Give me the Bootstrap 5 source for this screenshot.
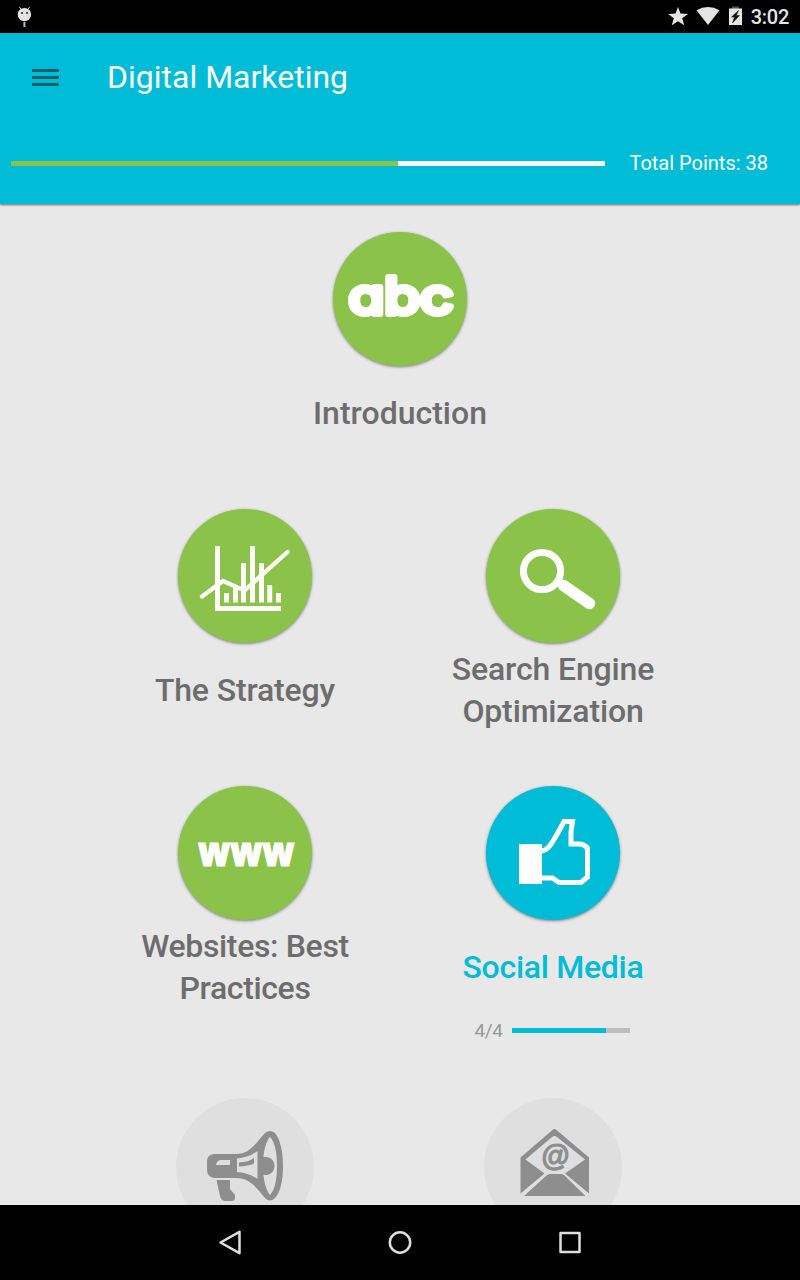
<!DOCTYPE html>
<html lang="en">
<head>
<meta charset="utf-8">
<meta name="viewport" content="width=device-width, initial-scale=1">
<title>Digital Marketing</title>
<link href="https://cdn.jsdelivr.net/npm/bootstrap@5.3.0/dist/css/bootstrap.min.css" rel="stylesheet">
<style>
  body { font-family: Roboto, sans-serif; background: #e8e8e8; height: 1280px; overflow: hidden; }
  .status-bar { height: 33px; background: #000; padding-right: 11px; }
  .clock { font-size: 20px; font-weight: 500; line-height: 33px; color: #e5e5e5; margin-left: 8px; padding-top: 1px; letter-spacing: -.25px; }
  .app-header { height: 171px; background: #00bcd7; box-shadow: 0 1px 2px rgba(0,0,0,.55); z-index: 1; }
  .toolbar { height: 88px; padding-left: 32px; }
  .app-title { font-size: 32px; font-weight: 400; line-height: 42px; margin-left: 47px; }
  .points-row { height: 84px; padding: 0 32px 0 11px; }
  .points-bar { width: 594px; height: 5px; background: #fff; border-radius: 0; }
  .points-bar .progress-bar { background: #8bc34a; }
  .points-text { font-size: 20px; line-height: 24px; }
  .lessons { padding-top: 28px; }
  .lesson-row { height: 277px; }
  .lesson-row.tall { height: 312px; }
  .lesson { width: 308px; }
  .lesson-pair { padding-left: 91px; }
  .disc { width: 134px; height: 134px; background: #8bc34a; box-shadow: 0 1px 3px rgba(0,0,0,.45); }
  .disc.active { background: #00bcd7; }
  .disc.locked { width: 138px; height: 138px; background: #dfdfdf; box-shadow: none; }
  .disc svg { display: block; width: 100%; height: 100%; overflow: visible; }
  .lesson-name { height: 84px; margin-top: 5px; width: 240px; font-size: 32px; font-weight: 500; line-height: 42px; color: #6d6d6d; }
  .lesson-name.snug { letter-spacing: -.15px; }
  .lesson-name.tight { letter-spacing: -.35px; }
  .lesson-name.current { color: #00bcd7; letter-spacing: -.28px; }
  .step-row { height: 42px; gap: 9px; padding-right: 2px; }
  .step-count { font-size: 19px; line-height: 24px; color: #999; padding-top: 2px; letter-spacing: -.4px; }
  .step-bar { width: 118px; height: 5px; background: #bdbdbd; border-radius: 0; }
  .step-bar .progress-bar { background: #00bcd7; }
  .nav-keys { height: 75px; background: #000; z-index: 2; }
</style>
</head>
<body class="d-flex flex-column">

<div class="status-bar d-flex align-items-center flex-shrink-0">
  <svg width="50" height="33" viewBox="0 0 50 33" fill="#e3e3e3">
    <circle cx="24.4" cy="14.6" r="6.7"/>
    <path d="M19.3 7l2.5 3M29.7 7l-2.5 3" stroke="#e3e3e3" stroke-width="1"/>
    <path d="M21 12.2h2v1.5h-2zM26 12.2h2v1.5h-2z" fill="#222"/>
    <path d="M23.4 22h2v5h-2z" fill="#bbb"/>
  </svg>
  <svg class="ms-auto" width="76" height="33" viewBox="667 0 76 33" fill="#e5e5e5">
    <path d="M678 7l2.500 6.600 7.500.3-5.800 4.300 2 7-6.200-4-6.200 4 2-7-5.800-4.300 7.500-.3z"/>
    <path d="M696.500 10.300Q708 3.500 719.500 10.300L708 25z"/>
    <path d="M732 6.500h7v3h-7z" fill="#555"/>
    <path d="M729 8.500h13v16.500h-13z"/>
    <path d="M738.500 10.500l-7 6.500h3l-2 6 7-7.500h-3.200l2.200-5z" fill="#111" stroke="#111" stroke-width=".5"/>
  </svg>
  <span class="clock">3:02</span>
</div>

<header class="app-header flex-shrink-0 position-relative text-white">
  <div class="toolbar d-flex align-items-center">
    <svg width="28" height="18" viewBox="0 0 28 18"><path d="M0 2.500h27M0 9.500h27M0 16.500h27" stroke="#00606d" stroke-width="3"/></svg>
    <h1 class="app-title mb-0">Digital Marketing</h1>
  </div>
  <div class="points-row d-flex align-items-center justify-content-between">
    <div class="progress points-bar"><div class="progress-bar" style="width:65.15%"></div></div>
    <span class="points-text">Total Points: 38</span>
  </div>
</header>

<main class="lessons flex-grow-1 overflow-hidden">
  <section class="lesson-row d-flex justify-content-center">
    <div class="lesson d-flex flex-column align-items-center">
      <div class="disc rounded-circle">
        <svg viewBox="0 0 134 134"><text x="15.500" y="82" textLength="105" lengthAdjust="spacingAndGlyphs" font-family="Inter, sans-serif" font-weight="400" font-size="50" fill="#fff" stroke="#fff" stroke-width="6" stroke-linejoin="round" style="font-feature-settings:'cv11'">abc</text></svg>
      </div>
      <div class="lesson-name d-flex align-items-center justify-content-center text-center">Introduction</div>
    </div>
  </section>

  <section class="lesson-row lesson-pair d-flex">
    <div class="lesson d-flex flex-column align-items-center">
      <div class="disc rounded-circle">
        <svg viewBox="178 509 134 134" fill="none" stroke="#fffdfa" stroke-width="5">
          <path d="M217.500 546v62.500H281"/>
          <path d="M226.500 593v9.500M235.500 586v16.500M243.500 563v39.500M252.500 546v56.500M261.500 563v39.500M269.700 585v17.500M278.500 593v9.500"/>
          <path d="M202 596.500L223 581l21.500 9.500L287.500 552" stroke-width="4.300" stroke-linecap="round"/>
        </svg>
      </div>
      <div class="lesson-name snug d-flex align-items-center justify-content-center text-center">The Strategy</div>
    </div>
    <div class="lesson d-flex flex-column align-items-center">
      <div class="disc rounded-circle">
        <svg viewBox="486 509 134 134" fill="none" stroke="#fff">
          <circle cx="542" cy="571" r="18.600" stroke-width="7"/>
          <path d="M563.500 585.500L589.500 603.500" stroke-width="11.500" stroke-linecap="round"/>
        </svg>
      </div>
      <div class="lesson-name snug d-flex align-items-center justify-content-center text-center">Search Engine Optimization</div>
    </div>
  </section>

  <section class="lesson-row tall lesson-pair d-flex">
    <div class="lesson d-flex flex-column align-items-center">
      <div class="disc rounded-circle">
        <svg viewBox="178 786 134 134"><text x="198" y="865.800" textLength="96.500" lengthAdjust="spacingAndGlyphs" font-family="'Open Sans', sans-serif" font-weight="800" font-size="41" fill="#fff" stroke="#fff" stroke-width="1.200">www</text></svg>
      </div>
      <div class="lesson-name tight d-flex align-items-center justify-content-center text-center">Websites: Best Practices</div>
    </div>
    <div class="lesson d-flex flex-column align-items-center">
      <div class="disc active rounded-circle">
        <svg viewBox="486 786 134 134">
          <path d="M519 844h23v40h-23z" fill="#fff"/>
          <path d="M542 851Q548 850 553 841Q558 833 564 821.500H572.500L571 831.500V844H579Q584 844 587.500 848V877L581 882.500H559L552.500 878H542" fill="none" stroke="#fff" stroke-width="5"/>
        </svg>
      </div>
      <div class="lesson-name current d-flex align-items-center justify-content-center text-center">Social Media</div>
      <div class="step-row d-flex align-items-center">
        <span class="step-count">4/4</span>
        <div class="progress step-bar"><div class="progress-bar" style="width:80.5%"></div></div>
      </div>
    </div>
  </section>

  <section class="lesson-row lesson-pair d-flex">
    <div class="lesson d-flex flex-column align-items-center">
      <div class="disc locked rounded-circle">
        <svg viewBox="176 1098 138 138" fill="#8e8e8e">
          <path fill-rule="evenodd" d="M214 1154H236C251 1154 257 1141 265 1133Q270 1129 275 1133C280 1139 283 1151 283 1166S280 1193 275 1198Q270 1203 265 1198C257 1189 251 1178 236 1178H214Q207 1177 207 1169V1161Q207 1155 214 1154zM270 1137C266 1141 263 1152 263 1166S266 1190 270 1195C275 1190 277 1179 277 1166S275 1142 270 1137zM216 1165Q217 1160 221 1160H230V1165zM237 1158.500V1172Q248 1172.500 257.500 1179V1151Q248 1158 237 1158.500z"/>
          <path d="M263 1157H267Q274.500 1159 274.500 1166T267 1175H263z"/>
          <path d="M239 1162.500Q249 1162 254 1158V1163.500Q248 1166 239 1166.500z"/>
          <path d="M216.500 1180H230V1189L235 1195V1198Q235 1201 232 1201H224Q221 1200 220 1196z"/>
        </svg>
      </div>
      <div class="lesson-name"></div>
    </div>
    <div class="lesson d-flex flex-column align-items-center">
      <div class="disc locked rounded-circle">
        <svg viewBox="484 1098 138 138" fill="#8e8e8e">
          <path fill-rule="evenodd" d="M520.500 1157.500L552.500 1130Q554.500 1128 556.500 1130L589 1157.500V1193.500L565 1173.500L585 1159.500L557 1137Q554.500 1135 552 1137L525.500 1159.500L544.500 1173.500L520.500 1193.500z"/>
          <path d="M524 1196L546.500 1175.500Q548 1174 550 1174H561Q563 1174 564.500 1175.500L585.500 1196z"/>
          <text x="541" y="1165.500" textLength="28" lengthAdjust="spacingAndGlyphs" font-family="'Liberation Sans', sans-serif" font-weight="700" font-style="italic" font-size="29" stroke="#8e8e8e" stroke-width="1.100">@</text>
        </svg>
      </div>
      <div class="lesson-name"></div>
    </div>
  </section>
</main>

<footer class="nav-keys flex-shrink-0">
  <svg class="d-block" width="800" height="75" viewBox="0 1205 800 75" fill="none" stroke="#dedede" stroke-width="2.500" stroke-linejoin="round">
    <path d="M220.500 1242.500L239.500 1231.800V1253.200z"/>
    <circle cx="400" cy="1242.500" r="10.200"/>
    <path d="M560.500 1233h19v19h-19z"/>
  </svg>
</footer>

<script src="https://cdn.jsdelivr.net/npm/bootstrap@5.3.0/dist/js/bootstrap.bundle.min.js"></script>
</body>
</html>
